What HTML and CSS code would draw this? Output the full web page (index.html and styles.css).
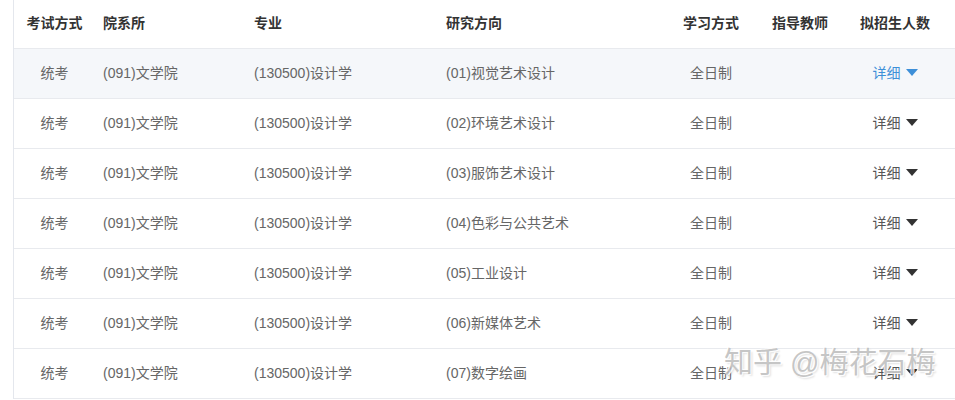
FILE: index.html
```html
<!DOCTYPE html>
<html lang="zh-CN">
<head>
<meta charset="utf-8">
<title>招生目录</title>
<link rel="stylesheet" href="styles.css">
</head>
<body>
<div class="wrap">
  <table class="tbl">
    <colgroup>
      <col class="c1"><col class="c2"><col class="c3"><col class="c4"><col class="c5"><col class="c6"><col class="c7">
    </colgroup>
    <thead>
      <tr>
        <th class="center">考试方式</th>
        <th>院系所</th>
        <th>专业</th>
        <th>研究方向</th>
        <th class="center">学习方式</th>
        <th class="center">指导教师</th>
        <th class="center last">拟招生人数</th>
      </tr>
    </thead>
    <tbody>
      <tr class="hover">
        <td class="center">统考</td><td>(091)文学院</td><td>(130500)设计学</td><td>(01)视觉艺术设计</td><td class="center">全日制</td><td></td>
        <td class="center last"><span class="more active">详细<i class="tri"></i></span></td>
      </tr>
      <tr>
        <td class="center">统考</td><td>(091)文学院</td><td>(130500)设计学</td><td>(02)环境艺术设计</td><td class="center">全日制</td><td></td>
        <td class="center last"><span class="more">详细<i class="tri"></i></span></td>
      </tr>
      <tr>
        <td class="center">统考</td><td>(091)文学院</td><td>(130500)设计学</td><td>(03)服饰艺术设计</td><td class="center">全日制</td><td></td>
        <td class="center last"><span class="more">详细<i class="tri"></i></span></td>
      </tr>
      <tr>
        <td class="center">统考</td><td>(091)文学院</td><td>(130500)设计学</td><td>(04)色彩与公共艺术</td><td class="center">全日制</td><td></td>
        <td class="center last"><span class="more">详细<i class="tri"></i></span></td>
      </tr>
      <tr>
        <td class="center">统考</td><td>(091)文学院</td><td>(130500)设计学</td><td>(05)工业设计</td><td class="center">全日制</td><td></td>
        <td class="center last"><span class="more">详细<i class="tri"></i></span></td>
      </tr>
      <tr>
        <td class="center">统考</td><td>(091)文学院</td><td>(130500)设计学</td><td>(06)新媒体艺术</td><td class="center">全日制</td><td></td>
        <td class="center last"><span class="more">详细<i class="tri"></i></span></td>
      </tr>
      <tr>
        <td class="center">统考</td><td>(091)文学院</td><td>(130500)设计学</td><td>(07)数字绘画</td><td class="center">全日制</td><td></td>
        <td class="center last"><span class="more">详细<i class="tri"></i></span></td>
      </tr>
    </tbody>
  </table>
  <div class="watermark">知乎 @梅花石梅</div>
</div>
</body>
</html>
```
FILE: styles.css
```css
html, body {
  margin: 0;
  padding: 0;
  background: #fff;
}
body {
  font-family: "Liberation Sans", "Noto Sans CJK SC", sans-serif;
  font-size: 14px;
  color: #666;
  overflow: hidden;
}
.wrap {
  position: relative;
  margin-left: 13px;
  border-left: 1px solid #e4e7ed;
  width: 941px;
}
.tbl {
  width: 941px;
  border-collapse: collapse;
  table-layout: fixed;
}
.c1 { width: 81px; }
.c2 { width: 151px; }
.c3 { width: 192px; }
.c4 { width: 228px; }
.c5 { width: 90px; }
.c6 { width: 88px; }
.c7 { width: 111px; }
th, td {
  padding: 0 0 0 8px;
  text-align: left;
  white-space: nowrap;
  border-bottom: 1px solid #e8eaee;
}
th {
  height: 48px;
  padding-bottom: 4px;
  box-sizing: border-box;
  font-weight: bold;
  color: #333;
}
td {
  height: 50px;
  padding-bottom: 2px;
  box-sizing: border-box;
}
th.center, td.center {
  text-align: center;
  padding-left: 0;
}
th.last, td.last {
  padding-right: 9px;
}
tr.hover td {
  background: #f5f7fa;
}
.more {
  display: inline-flex;
  align-items: center;
  gap: 5px;
  color: #555;
}
.more.active {
  color: #3d8fd8;
}
.tri {
  display: inline-block;
  width: 0;
  height: 0;
  border-left: 6.5px solid transparent;
  border-right: 6.5px solid transparent;
  border-top: 7px solid #333;
  margin-top: 1px;
}
.more.active .tri {
  border-top-color: #3d8fd8;
}
.watermark {
  position: absolute;
  left: 710px;
  top: 342px;
  font-size: 29px;
  line-height: 42px;
  color: rgba(160, 160, 160, 0.6);
  text-shadow: 1px 1px 0 rgba(255,255,255,0.9), -1px -1px 0 rgba(255,255,255,0.9), 2px 2px 2px rgba(0,0,0,0.12);
  white-space: nowrap;
  pointer-events: none;
}
```
